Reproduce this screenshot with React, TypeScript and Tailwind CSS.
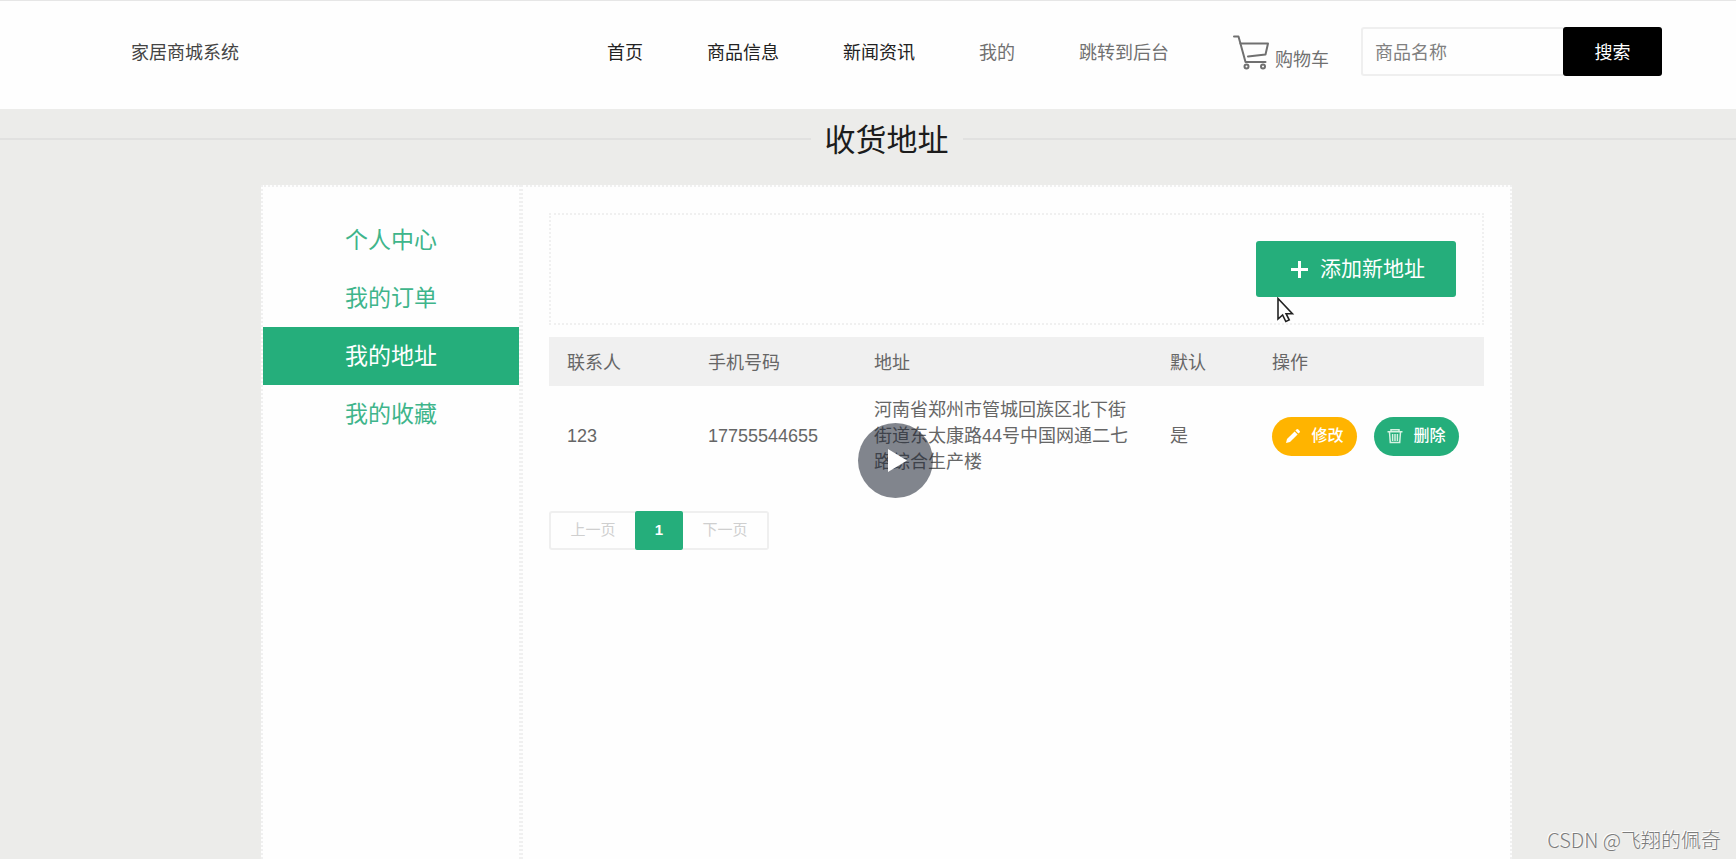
import React from 'react';

const navLinks = [
  { text: '首页', dark: true },
  { text: '商品信息', dark: true },
  { text: '新闻资讯', dark: true },
  { text: '我的', dark: false },
  { text: '跳转到后台', dark: false },
];

const sideLinks = ['个人中心', '我的订单', '我的地址', '我的收藏'];

const addressList = [
  {
    name: '123',
    phone: '17755544655',
    address: '河南省郑州市管城回族区北下街街道东太康路44号中国网通二七路综合生产楼',
    isDefault: '是',
  },
];

function CartIcon() {
  return (
    <svg width="37" height="36" viewBox="0 0 37 36" fill="none" stroke="#707070" strokeWidth="2" strokeLinejoin="round" strokeLinecap="round">
      <path d="M1 1.500h4.500L12.500 27h20" />
      <path d="M7.500 8.500h27.500l-2.500 11L15 21.500" />
      <circle cx="13.500" cy="31.500" r="2" />
      <circle cx="30" cy="31.500" r="2" />
    </svg>
  );
}

function PencilIcon() {
  return (
    <svg width="16" height="16" viewBox="0 0 16 16" fill="#fff">
      <path d="M1 15l1-4 7.600-7.600 3 3L5 14z" />
      <path d="M10.400 2.600l1.300-1.300a1 1 0 0 1 1.400 0l1.600 1.600a1 1 0 0 1 0 1.400l-1.300 1.300z" />
    </svg>
  );
}

function TrashIcon() {
  return (
    <svg width="16" height="16" viewBox="0 0 16 16" fill="none" stroke="#d6f2e2" strokeWidth="1.500">
      <path d="M0.500 3.800h15M4 3.500V1.800h8v1.700" />
      <path d="M2.500 4l.8 10.500h9.400L13.500 4M5.600 6v7M8 6v7M10.400 6v7" />
    </svg>
  );
}

function Header() {
  return (
    <header className="flex h-[109px] items-center border-t border-[#e6e6e6] bg-[#fefefe] pb-2 pl-[131px] pr-[74px] text-[18px]">
      <span className="pt-1 text-[#444]">家居商城系统</span>
      <nav className="ml-auto flex items-center gap-16 pt-1 text-[#707070]">
        {navLinks.map((item) => (
          <a key={item.text} href="#" className={item.dark ? 'text-[#222]' : ''}>
            {item.text}
          </a>
        ))}
        <a href="#" className="flex items-end gap-[5px]">
          <CartIcon />
          <span className="leading-[22px]">购物车</span>
        </a>
      </nav>
      <form className="ml-8 flex h-[49px]" onSubmit={(e) => e.preventDefault()}>
        <input
          type="text"
          aria-label="商品名称"
          placeholder="商品名称"
          className="w-[202px] rounded-l-[3px] border-2 border-r-0 border-[#efefef] px-3 pt-1 outline-none placeholder:text-[#808080]"
        />
        <button type="submit" className="w-[99px] rounded-[3px] bg-black pt-1 text-white">
          搜索
        </button>
      </form>
    </header>
  );
}

function Sidebar() {
  return (
    <aside className="w-[260px] shrink-0 border-2 border-b-0 border-dotted border-[#f0f0f0] bg-[#fefefe] py-6">
      {sideLinks.map((text) => (
        <a
          key={text}
          href="#"
          className={
            'flex h-[58px] items-center justify-center text-[23px] ' +
            (text === '我的地址' ? 'bg-[#25ae7b] text-white' : 'text-[#3fb58b]')
          }
        >
          {text}
        </a>
      ))}
    </aside>
  );
}

function AddressTable() {
  return (
    <table className="mt-3 w-full table-fixed text-left text-[18px] text-[#666]">
      <colgroup>
        <col className="w-[141px]" />
        <col className="w-[166px]" />
        <col className="w-[296px]" />
        <col className="w-[102px]" />
        <col />
      </colgroup>
      <thead>
        <tr className="h-[49px] bg-[#f0f0f0]">
          <th className="px-[18px] pt-1 font-normal">联系人</th>
          <th className="px-[18px] pt-1 font-normal">手机号码</th>
          <th className="px-[18px] pt-1 font-normal">地址</th>
          <th className="px-[18px] pt-1 font-normal">默认</th>
          <th className="px-[18px] pt-1 font-normal">操作</th>
        </tr>
      </thead>
      <tbody>
        {addressList.map((row) => (
          <tr key={row.phone} className="h-[100px] leading-[26px]">
            <td className="px-[18px]">{row.name}</td>
            <td className="px-[18px]">{row.phone}</td>
            <td className="px-[18px]">{row.address}</td>
            <td className="px-[18px]">{row.isDefault}</td>
            <td className="px-[18px]">
              <div className="flex gap-[17px] text-[16px] font-medium text-white">
                <button type="button" className="flex h-[39px] w-[85px] items-center justify-center gap-[10px] rounded-full bg-[#ffb400]">
                  <PencilIcon />
                  修改
                </button>
                <button type="button" className="flex h-[39px] w-[85px] items-center justify-center gap-[10px] rounded-full bg-[#25ae7b]">
                  <TrashIcon />
                  删除
                </button>
              </div>
            </td>
          </tr>
        ))}
      </tbody>
    </table>
  );
}

function Pager() {
  return (
    <div className="mt-[25px] flex h-[39px] w-fit text-[15px] text-[#cfcfcf]">
      <button type="button" className="w-[86px] rounded-l-[3px] border-2 border-r-0 border-[#efefef]">
        上一页
      </button>
      <button type="button" className="w-12 rounded-[2px] bg-[#25ae7b] font-bold text-white">
        1
      </button>
      <button type="button" className="w-[86px] rounded-r-[3px] border-2 border-l-0 border-[#efefef]">
        下一页
      </button>
    </div>
  );
}

export default function App() {
  return (
    <div className="relative flex min-h-screen flex-col overflow-hidden bg-[#ececea] font-['Liberation_Sans','Noto_Sans_CJK_SC',sans-serif]">
      <Header />
      {/* the page runs a little past the right edge of the window */}
      <main className="-mr-[37px] flex grow flex-col">
        <div className="mb-4 flex h-[60px] items-center gap-[14px]">
          <div className="h-[2px] flex-1 bg-[#e1e1e0]" />
          <h1 className="pt-1 text-[31px] text-[#1c1c1c]">收货地址</h1>
          <div className="h-[2px] flex-1 bg-[#e1e1e0]" />
        </div>
        <div className="mx-auto flex w-full max-w-[1251px] grow">
          <Sidebar />
          <section className="grow border-2 border-b-0 border-dotted border-[#f0f0f0] bg-[#fefefe] p-[26px]">
            <div className="flex justify-end border-2 border-dotted border-[#f0f0f0] p-[26px]">
              <button type="button" className="flex h-14 w-[200px] items-center justify-center gap-3 rounded-[3px] bg-[#25ae7b] pl-1 text-[21px] text-white">
                <svg width="17" height="17" viewBox="0 0 17 17" stroke="#fff" strokeWidth="3">
                  <path d="M8.500 0v17M0 8.500h17" />
                </svg>
                添加新地址
              </button>
            </div>
            <AddressTable />
            <Pager />
          </section>
        </div>
      </main>

      {/* video overlay: play button, pointer, watermark */}
      <button type="button" aria-label="播放" className="absolute left-[858px] top-[423px] flex size-[75px] items-center justify-center rounded-full bg-[rgba(31,38,51,0.56)]">
        <svg width="19" height="23" viewBox="0 0 19 23" fill="#fff" className="ml-1">
          <path d="M0 0l19 11.500L0 23z" />
        </svg>
      </button>
      <svg width="18" height="26" viewBox="0 0 18 26" className="absolute left-[1277px] top-[297px]" fill="#fff" stroke="#222" strokeWidth="1.600">
        <path d="M1 1.500v20.500l4.600-4 3.200 6.500 3.400-1.600-3.100-6.200h6.300z" />
      </svg>
      <div className="absolute bottom-1 right-[15px] font-['Noto_Sans_CJK_SC',sans-serif] text-[20px] font-light leading-[30px] text-[#7c7c7c] [text-shadow:-1px_-1px_0_#fff]">
        CSDN @飞翔的佩奇
      </div>
    </div>
  );
}
